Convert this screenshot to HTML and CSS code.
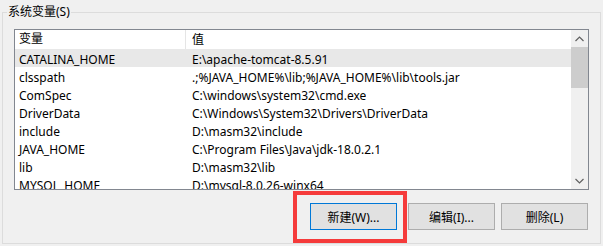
FILE: index.html
```html
<!DOCTYPE html>
<html>
<head>
    <meta charset="utf-8">
    <title>系统变量</title>
    <link rel="stylesheet" href="styles.css">
</head>
<body>
    <div class="group">
        <div class="group-label">系统变量(S)</div>
        <div class="list">
            <div class="list-body">
                <div class="row header">
                    <div class="cell name">变量</div>
                    <div class="cell value">值</div>
                </div>
                <div class="row selected">
                    <div class="cell name">CATALINA_HOME</div>
                    <div class="cell value">E:\apache-tomcat-8.5.91</div>
                </div>
                <div class="row">
                    <div class="cell name">clsspath</div>
                    <div class="cell value">.;%JAVA_HOME%\lib;%JAVA_HOME%\lib\tools.jar</div>
                </div>
                <div class="row">
                    <div class="cell name">ComSpec</div>
                    <div class="cell value">C:\windows\system32\cmd.exe</div>
                </div>
                <div class="row">
                    <div class="cell name">DriverData</div>
                    <div class="cell value">C:\Windows\System32\Drivers\DriverData</div>
                </div>
                <div class="row">
                    <div class="cell name">include</div>
                    <div class="cell value">D:\masm32\include</div>
                </div>
                <div class="row">
                    <div class="cell name">JAVA_HOME</div>
                    <div class="cell value">C:\Program Files\Java\jdk-18.0.2.1</div>
                </div>
                <div class="row">
                    <div class="cell name">lib</div>
                    <div class="cell value">D:\masm32\lib</div>
                </div>
                <div class="row">
                    <div class="cell name">MYSQL_HOME</div>
                    <div class="cell value">D:\mysql-8.0.26-winx64</div>
                </div>
            </div>
            <div class="scrollbar">
                <div class="arrow">
                    <svg width="9" height="6" viewBox="0 0 9 6"><path d="M0.5 5 L4.5 1 L8.5 5" fill="none" stroke="#606060" stroke-width="1.2"/></svg>
                </div>
                <div class="track">
                    <div class="thumb"></div>
                </div>
                <div class="arrow">
                    <svg width="9" height="6" viewBox="0 0 9 6"><path d="M0.5 1 L4.5 5 L8.5 1" fill="none" stroke="#606060" stroke-width="1.2"/></svg>
                </div>
            </div>
        </div>
        <div class="buttons">
            <div class="btn-wrap">
                <button class="btn default">新建(W)...</button>
                <div class="highlight"></div>
            </div>
            <button class="btn">编辑(I)...</button>
            <button class="btn">删除(L)</button>
        </div>
    </div>
</body>
</html>
```

FILE: styles.css
```css
body {
    margin: 0;
    width: 603px;
    height: 246px;
    background: #f0f0f0;
    font-family: "Noto Sans", "Noto Sans CJK SC", sans-serif;
    font-size: 12px;
    color: #000;
    overflow: hidden;
}

.group {
    position: relative;
    box-sizing: border-box;
    margin: 12px 2px 0 2px;
    height: 232px;
    border: 1px solid #dcdcdc;
    padding: 16px 11px 0 11px;
}

.group-label {
    position: absolute;
    top: -9px;
    left: 4px;
    padding: 0 1px;
    background: #f0f0f0;
    line-height: 16px;
}

.list {
    display: flex;
    height: 159px;
    border: 1px solid #828790;
    background: #fff;
    overflow: hidden;
}

.list-body {
    flex: 1;
    overflow: hidden;
}

.row {
    display: flex;
    box-sizing: border-box;
    height: 18px;
    padding-top: 2px;
    line-height: 18px;
    white-space: nowrap;
    overflow: hidden;
}

.row.header {
    height: 19px;
    padding-top: 1px;
}

.row.selected {
    background: #e8e8e8;
}

.cell {
    overflow: hidden;
}

.cell.name {
    width: 166px;
    padding-left: 4px;
    flex: none;
}

.header .cell.name {
    border-right: 1px solid #e5e5e5;
    margin-top: -1px;
}

.row:not(.header) .cell.name {
    margin-right: 1px;
}

.cell.value {
    padding-left: 6px;
}

.scrollbar {
    width: 17px;
    flex: none;
    display: flex;
    flex-direction: column;
    background: #f0f0f0;
}

.arrow {
    height: 17px;
    display: flex;
    align-items: center;
    justify-content: center;
}

.track {
    flex: 1;
}

.thumb {
    width: 17px;
    height: 41px;
    background: #cdcdcd;
}

.buttons {
    display: flex;
    justify-content: flex-end;
    gap: 6px;
    margin-top: 13px;
    padding-right: 1px;
}

.btn-wrap {
    position: relative;
    margin-right: 5px;
}

.btn {
    display: block;
    width: 87px;
    height: 27px;
    margin: 0;
    padding: 1px 0 0 0;
    background: #e1e1e1;
    border: 1px solid #adadad;
    font-family: "Noto Sans", "Noto Sans CJK SC", sans-serif;
    font-size: 12px;
    color: #000;
}

.btn.default {
    border-color: #0078d7;
}

.highlight {
    position: absolute;
    top: -12px;
    left: -17px;
    right: -10px;
    bottom: -13px;
    border: 4px solid #f53b3b;
}
```
